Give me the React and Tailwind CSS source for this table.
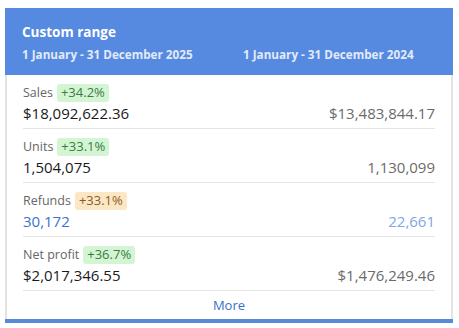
import React from "react";

const rows = [
  { label: "Sales", change: "+34.2%", tone: "green", current: "$18,092,622.36", previous: "$13,483,844.17" },
  { label: "Units", change: "+33.1%", tone: "green", current: "1,504,075", previous: "1,130,099" },
  { label: "Refunds", change: "+33.1%", tone: "amber", current: "30,172", previous: "22,661", blue: true },
  { label: "Net profit", change: "+36.7%", tone: "green", current: "$2,017,346.55", previous: "$1,476,249.46" },
];

function Badge({ tone, children }) {
  const cls =
    tone === "amber"
      ? "bg-[#fbe7c4] text-[#8a5a2c]"
      : "bg-[#d3f5d3] text-[#3d7a44]";
  return (
    <span className={`ml-[4px] inline-flex h-[18px] items-center rounded-[3px] px-[4px] text-[13px] ${cls}`}>
      {children}
    </span>
  );
}

function MetricRow({ row }) {
  return (
    <div className="border-b border-[#e4e4e4] pt-[9px] pb-[5px]">
      <div className="flex h-[18px] items-center">
        <span className="text-[12.5px] text-[#666]">{row.label}</span>
        <Badge tone={row.tone}>{row.change}</Badge>
      </div>
      <div className="mt-[1px] flex h-[20px] items-center justify-between text-[15px]">
        <span className={row.blue ? "text-[#3d72cc]" : "text-[#1a1a1a]"}>{row.current}</span>
        <span className={row.blue ? "text-[#7ea6e6]" : "text-[#6b6b6b]"}>{row.previous}</span>
      </div>
    </div>
  );
}

export default function App() {
  return (
    <div className="h-[328px] w-[459px] bg-white pl-[5px] pt-[8px]" style={{ fontFamily: '"Open Sans", sans-serif' }}>
      <div className="w-[448px]">
        <div className="h-[67px] bg-[#568ae0] pl-[17px] pt-[14px] text-white">
          <div className="text-[13.5px] font-bold leading-[20px]">Custom range</div>
          <div className="mt-[4px] flex text-[11.7px] font-bold leading-[16px] text-[#e2eaf9]">
            <span className="w-[221px]">1 January - 31 December 2025</span>
            <span>1 January - 31 December 2024</span>
          </div>
        </div>
        <div className="border-x-2 border-[#e4e4e4] px-[16px]">
          {rows.map((r) => (
            <MetricRow key={r.label} row={r} />
          ))}
          <div className="flex h-[28px] items-center justify-center pt-[1px] text-[13px] text-[#3a70c8]">More</div>
        </div>
        <div className="h-[4px] bg-[#568ad8]" />
      </div>
    </div>
  );
}
